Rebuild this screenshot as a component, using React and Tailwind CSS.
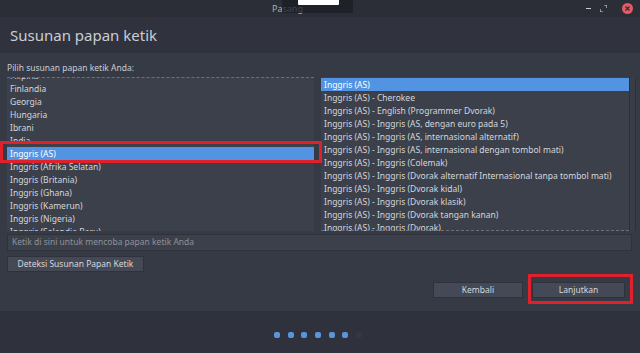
import React from 'react';

const LEFT_ITEMS = [
  'Filipina',
  'Finlandia',
  'Georgia',
  'Hungaria',
  'Ibrani',
  'India',
  'Inggris (AS)',
  'Inggris (Afrika Selatan)',
  'Inggris (Britania)',
  'Inggris (Ghana)',
  'Inggris (Kamerun)',
  'Inggris (Nigeria)',
  'Inggris (Selandia Baru)',
];

const RIGHT_ITEMS = [
  'Inggris (AS)',
  'Inggris (AS) - Cherokee',
  'Inggris (AS) - English (Programmer Dvorak)',
  'Inggris (AS) - Inggris (AS, dengan euro pada 5)',
  'Inggris (AS) - Inggris (AS, internasional alternatif)',
  'Inggris (AS) - Inggris (AS, internasional dengan tombol mati)',
  'Inggris (AS) - Inggris (Colemak)',
  'Inggris (AS) - Inggris (Dvorak alternatif Internasional tanpa tombol mati)',
  'Inggris (AS) - Inggris (Dvorak kidal)',
  'Inggris (AS) - Inggris (Dvorak klasik)',
  'Inggris (AS) - Inggris (Dvorak tangan kanan)',
  'Inggris (AS) - Inggris (Dvorak)',
];

const Row = ({ label, selected }) => (
  <div
    className={
      'h-[13px] leading-[13px] px-[3px] whitespace-nowrap ' +
      (selected ? 'bg-[#5294e2] text-white' : 'text-[#d3d7de]')
    }
  >
    {label}
  </div>
);

export default function App() {
  return (
    <div
      className="relative w-[640px] h-[353px] overflow-hidden flex flex-col bg-[#2f323c] text-[8.5px]"
      style={{ fontFamily: '"Noto Sans", "DejaVu Sans", sans-serif' }}
    >
      {/* title bar */}
      <div className="h-[17px] shrink-0 bg-[#2b2e37] flex items-center relative">
        <span className="ml-[272px] text-[9px] text-[#a9aeb7]">Pasang</span>
        <div className="ml-auto mr-[7px] flex items-center gap-[9px]">
          <span className="w-[5px] h-[1px] bg-[#c8ccd3]" />
          <svg width="7" height="7" viewBox="0 0 7 7">
            <path d="M4 0h3v3M3 7H0V4" fill="none" stroke="#c8ccd3" strokeWidth="1.2" />
          </svg>
          <span className="w-[11px] h-[11px] rounded-full bg-[#e45a67] flex items-center justify-center ml-[6px]">
            <svg width="5" height="5" viewBox="0 0 5 5">
              <path d="M0.5 0.5l4 4M4.5 0.5l-4 4" stroke="#2b2e37" strokeWidth="1.2" />
            </svg>
          </span>
        </div>
      </div>

      {/* header */}
      <div className="h-[36px] shrink-0 bg-[#30333d] flex items-center pl-[10px]">
        <span className="text-[15px] text-[#c9cdd4]">Susunan papan ketik</span>
      </div>

      {/* content */}
      <div className="h-[258px] shrink-0 bg-[#363a45] pl-[7px] pr-[4px] pt-[10px] flex flex-col">
        <div className="h-[14px] text-[#c9cdd4] leading-[10px]">Pilih susunan papan ketik Anda:</div>
        <div className="flex h-[154px] gap-[7px]">
          <div className="w-[307px] h-full bg-[#3c404b] border-t border-dashed border-[#6a6f7a] overflow-hidden">
            <div className="-mt-[9px]">
              {LEFT_ITEMS.map((it) => (
                <Row key={it} label={it} selected={it === 'Inggris (AS)'} />
              ))}
            </div>
          </div>
          <div className="flex-1 flex h-full">
            <div className="w-[308px] h-full bg-[#3c404b] overflow-hidden relative">
              <div className="pt-[1px]">
                {RIGHT_ITEMS.map((it, i) => (
                  <Row key={it} label={it} selected={i === 0} />
                ))}
              </div>
              <div className="absolute left-0 right-0 bottom-0 h-[1px] border-b border-dashed border-[#6a6f7a]" />
            </div>
            <div className="flex-1 h-full border-l border-r border-[#2d3039] bg-[#393d48]" />
          </div>
        </div>
        <div className="mt-[3px] h-[17px] mr-[4px] bg-[#3c404b] border border-[#2f323c] flex items-center px-[4px] text-[#8d929c]">
          Ketik di sini untuk mencoba papan ketik Anda
        </div>
        <div className="mt-[5px] flex">
          <button className="h-[16px] w-[137px] bg-[#454955] text-[#d3d7de] border border-[#2f323c] text-[8.5px]">
            Deteksi Susunan Papan Ketik
          </button>
        </div>
        <div className="mt-[10px] flex justify-end pr-[11px] gap-[9px]">
          <button className="h-[16px] w-[90px] bg-[#454955] text-[#d3d7de] border border-[#2f323c] text-[8.5px]">
            Kembali
          </button>
          <button className="h-[16px] w-[93px] bg-[#454955] text-[#d3d7de] border border-[#2f323c] text-[8.5px]">
            Lanjutkan
          </button>
        </div>
      </div>

      {/* footer dots */}
      <div className="flex-1 bg-[#2f323c] flex items-center justify-center">
        <div className="flex items-center gap-[7.7px] -ml-[4px] mt-[5px]">
          {[0, 1, 2, 3, 4, 5].map((i) => (
            <span key={i} className="w-[6px] h-[6px] rounded-[2px] bg-[#5b94dc]" />
          ))}
          <span className="w-[6px] h-[6px] rounded-[2px] bg-[#343843]" />
        </div>
      </div>

      {/* overlays */}
      <div className="absolute left-[282px] top-0 w-[71px] h-[13px] bg-[#1c1e25]/75">
        <div className="ml-[16px] w-[41px] h-[5px] bg-white rounded-b-[1px]" />
      </div>
      <div className="absolute left-0 top-[141px] w-[322px] h-[22px] border-[3px] border-[#e0202a]" />
      <div className="absolute left-[528px] top-[274px] w-[105px] h-[30px] border-[3px] border-[#e0202a]" />
    </div>
  );
}
